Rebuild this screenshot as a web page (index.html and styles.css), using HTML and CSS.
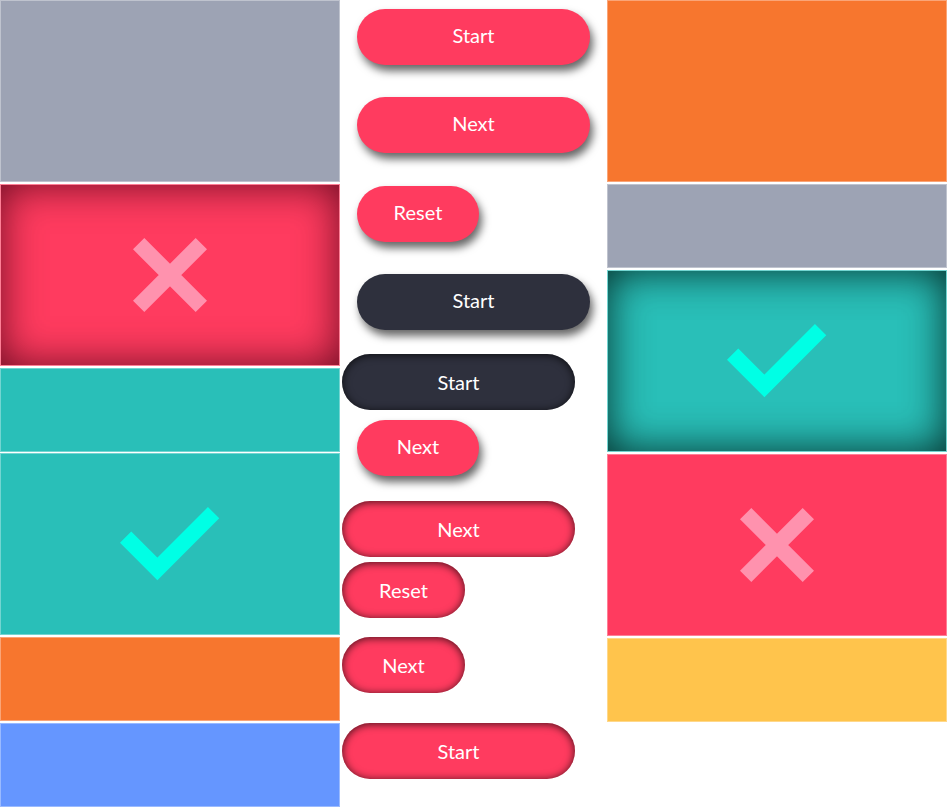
FILE: index.html
```html
<!DOCTYPE html>
<html lang="en">
<head>
<meta charset="utf-8">
<title>Buttons and tiles</title>
<link rel="stylesheet" href="styles.css">
</head>
<body>
<div class="page">
  <div class="col col-side">
    <div class="box box-big gray"></div>
    <div class="box box-big red sunk-red">
      <svg class="icon-x" width="74" height="74" viewBox="0 0 74 74"><path d="M5.66 5.66L68.34 68.34M68.34 5.66L5.66 68.34"/></svg>
    </div>
    <div class="box box-small teal"></div>
    <div class="box box-big teal">
      <svg class="icon-check" width="100" height="74" viewBox="0 -0.5 100 74"><polyline points="5.6,29.6 37.4,61.4 93.6,5.2"/></svg>
    </div>
    <div class="box box-small orange"></div>
    <div class="box box-small blue"></div>
  </div>

  <div class="col col-mid">
    <button class="btn raised wide">Start</button>
    <button class="btn raised wide">Next</button>
    <button class="btn raised narrow">Reset</button>
    <button class="btn raised wide dark">Start</button>
    <button class="btn sunk wide dark">Start</button>
    <button class="btn raised narrow">Next</button>
    <button class="btn sunk wide">Next</button>
    <button class="btn sunk narrow">Reset</button>
    <button class="btn sunk narrow">Next</button>
    <button class="btn sunk wide">Start</button>
  </div>

  <div class="col col-side">
    <div class="box box-big orange"></div>
    <div class="box box-small gray"></div>
    <div class="box box-big teal sunk-teal">
      <svg class="icon-check" width="100" height="74" viewBox="0 -0.5 100 74"><polyline points="5.6,29.6 37.4,61.4 93.6,5.2"/></svg>
    </div>
    <div class="box box-big red">
      <svg class="icon-x" width="74" height="74" viewBox="0 0 74 74"><path d="M5.66 5.66L68.34 68.34M68.34 5.66L5.66 68.34"/></svg>
    </div>
    <div class="box box-small yellow"></div>
  </div>
</div>
</body>
</html>
```

FILE: styles.css
```css
html, body {
  margin: 0;
  padding: 0;
  background: #ffffff;
}

body {
  font-family: Lato, "Liberation Sans", sans-serif;
  overflow: hidden;
}

.page {
  display: grid;
  grid-template-columns: 340px 267px 340px;
  width: 948px;
  height: 808px;
}

.col {
  display: flex;
  flex-direction: column;
}

.col-side {
  gap: 2px;
}

.col-side:first-child {
  gap: 1.8px;
}

.box {
  box-sizing: border-box;
  border: 1px solid rgba(255, 255, 255, 0.35);
  display: flex;
  align-items: center;
  justify-content: center;
}

.box-big { height: 182px; }
.box-small { height: 84px; }

.gray { background: #9da3b4; }
.red { background: #ff3b5f; }
.teal { background: #29bfb8; }
.orange { background: #f7762e; }
.blue { background: #6596ff; }
.yellow { background: #ffc44c; }

.sunk-red {
  box-shadow: inset 0 0 40px rgba(70, 0, 20, 0.8);
}

.sunk-teal {
  box-shadow: inset 0 0 40px rgba(0, 30, 25, 0.9);
}

.icon-x path {
  fill: none;
  stroke: #ff92ae;
  stroke-width: 16;
  stroke-linecap: butt;
}

.icon-check polyline {
  fill: none;
  stroke: #00ffe5;
  stroke-width: 16;
  stroke-linecap: butt;
  stroke-linejoin: miter;
}

/* buttons */
.col-mid {
  align-items: flex-start;
}

.btn {
  box-sizing: border-box;
  height: 56px;
  border: 0;
  border-radius: 28px;
  padding: 0 0 4px 0;
  background: #ff3b5f;
  color: #ffffff;
  font-family: Lato, "Liberation Sans", sans-serif;
  font-size: 20px;
  line-height: 52px;
  text-align: center;
  flex: 0 0 auto;
}

.btn.dark { background: #2e303d; }

.wide { width: 233px; }
.narrow { width: 122px; }

.raised {
  margin-left: 17px;
  box-shadow: 3px 6px 9px rgba(0, 0, 0, 0.6);
}

.sunk {
  margin-left: 2px;
  padding: 0;
  line-height: 56px;
  box-shadow: inset 0 1px 8px rgba(0, 0, 0, 0.75);
}

.narrow.sunk { width: 123px; }

.col-mid .btn:nth-child(1) { margin-top: 9px; }
.col-mid .btn:nth-child(2) { margin-top: 32px; }
.col-mid .btn:nth-child(3) { margin-top: 33px; }
.col-mid .btn:nth-child(4) { margin-top: 32px; }
.col-mid .btn:nth-child(5) { margin-top: 24px; }
.col-mid .btn:nth-child(6) { margin-top: 10px; }
.col-mid .btn:nth-child(7) { margin-top: 25px; }
.col-mid .btn:nth-child(8) { margin-top: 5px; }
.col-mid .btn:nth-child(9) { margin-top: 19px; }
.col-mid .btn:nth-child(10) { margin-top: 30px; }
```
